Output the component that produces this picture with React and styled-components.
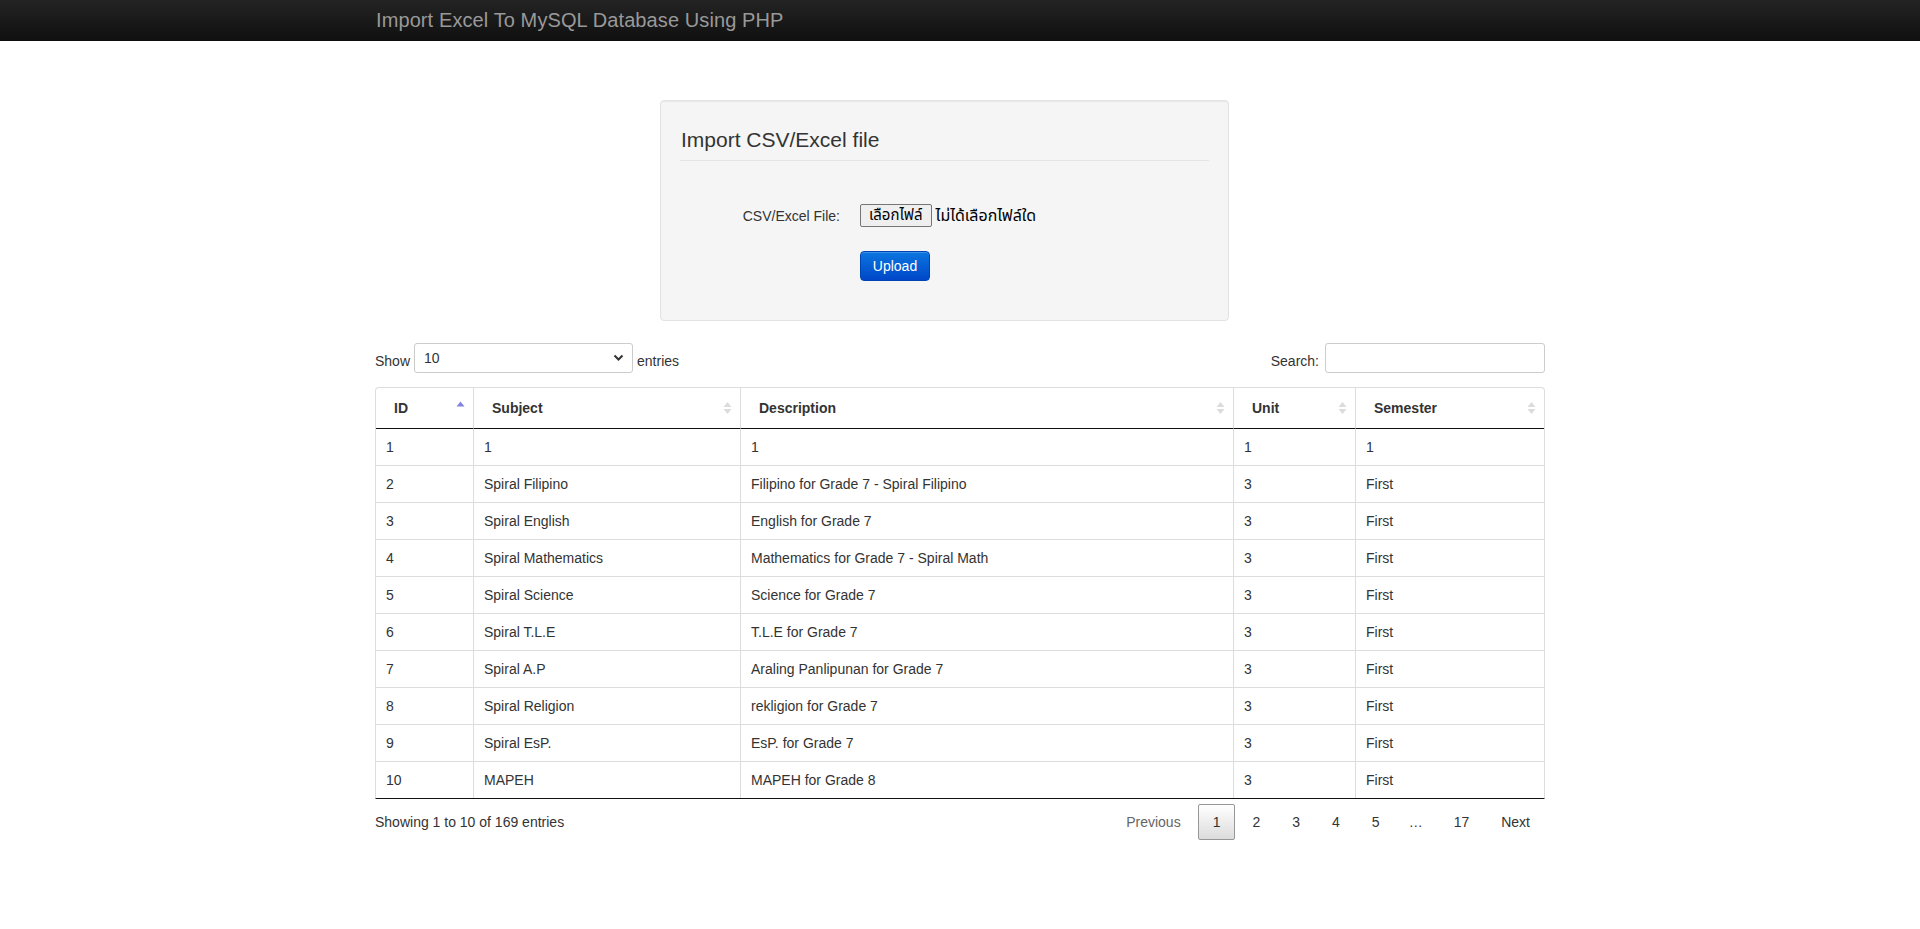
import React from "react";
import styled, { createGlobalStyle } from "styled-components";

const Global = createGlobalStyle`
  html, body { margin: 0; padding: 0; background: #fff; }
  body {
    font-family: "Liberation Sans", Arial, "Noto Sans Thai", "DejaVu Sans", sans-serif;
    font-size: 14px;
    line-height: 20px;
    color: #333;
  }
  * { box-sizing: border-box; }
`;

const Navbar = styled.header`
  height: 41px;
  background: linear-gradient(to bottom, #242424, #101010);
  border-bottom: 1px solid #0c0c0c;
`;

const NavInner = styled.div`
  width: 1170px;
  margin: 0 auto;
  padding: 10px 0 0 1px;
`;

const Brand = styled.span`
  font-size: 20px;
  line-height: 20px;
  color: #999;
  letter-spacing: 0.1px;
`;

const Container = styled.main`
  width: 1170px;
  margin: 0 auto;
`;

const Well = styled.section`
  margin: 59px 0 0 285px;
  width: 569px;
  background: #f5f5f5;
  border: 1px solid #e3e3e3;
  border-radius: 4px;
  box-shadow: inset 0 1px 1px rgba(0, 0, 0, 0.05);
  padding: 19px 19px 39px;
`;

const Legend = styled.h2`
  margin: 0;
  padding: 5px 0 5px 1px;
  font-size: 21px;
  font-weight: normal;
  line-height: 30px;
  color: #333;
  border-bottom: 1px solid #e5e5e5;
`;

const FormRow = styled.div`
  display: flex;
  align-items: center;
  margin-top: ${(p) => p.$top}px;
  padding-left: ${(p) => p.$indent || 0}px;
  height: ${(p) => p.$h}px;
`;

const Label = styled.label`
  width: 160px;
  text-align: right;
  margin-right: 20px;
  color: #333;
`;

const FileButton = styled.span`
  display: inline-flex;
  align-items: center;
  height: 23px;
  padding: 0 8px;
  border: 1px solid #767676;
  border-radius: 2px;
  background: #efefef;
  font-family: "Noto Sans Thai", "Liberation Sans", "DejaVu Sans", sans-serif;
  font-size: 15px;
  color: #000;
`;

const FileName = styled.span`
  margin-left: 4px;
  font-family: "Noto Sans Thai", "Liberation Sans", "DejaVu Sans", sans-serif;
  font-size: 16px;
  color: #000;
`;

const PrimaryButton = styled.button`
  width: 70px;
  height: 30px;
  border: 1px solid #0044b3;
  border-radius: 4px;
  background: linear-gradient(to bottom, #0a76df, #0047c8);
  color: #fff;
  font-family: "Liberation Sans", Arial, sans-serif;
  font-size: 14px;
  padding: 0;
  box-shadow: inset 0 1px 0 rgba(255, 255, 255, 0.2);
`;

const Controls = styled.div`
  display: flex;
  justify-content: space-between;
  align-items: flex-start;
  margin-top: 22px;
  height: 30px;
`;

const InlineLabel = styled.label`
  display: flex;
  align-items: flex-start;
  gap: ${(p) => p.$gap}px;
`;

const LabelText = styled.span`
  padding-top: 8px;
  line-height: 20px;
`;

const SelectWrap = styled.span`
  position: relative;
  display: inline-block;
`;

const Select = styled.select`
  appearance: none;
  width: 219px;
  height: 30px;
  border: 1px solid #ccc;
  border-radius: 3px;
  background: #fff;
  padding: 0 9px;
  font-family: "Liberation Sans", Arial, sans-serif;
  font-size: 14px;
  color: #333;
  line-height: 28px;
`;

const Chevron = styled.svg`
  position: absolute;
  right: 9px;
  top: 11px;
  pointer-events: none;
`;

const SearchInput = styled.input`
  width: 220px;
  height: 30px;
  border: 1px solid #ccc;
  border-radius: 3px;
  background: #fff;
  padding: 0 8px;
`;

const Table = styled.table`
  margin-top: 14px;
  width: 1170px;
  table-layout: fixed;
  border-collapse: separate;
  border-spacing: 0;
  border: 1px solid #ddd;
  border-bottom-color: #111;
  border-radius: 4px 4px 0 0;
`;

const Th = styled.th`
  position: relative;
  text-align: left;
  font-weight: bold;
  padding: 10px 18px;
  line-height: 20px;
  color: #333;
  border-bottom: 1px solid #111;
  & + & { border-left: 1px solid #ddd; }
`;

const Td = styled.td`
  padding: 8px 10px;
  line-height: 20px;
  color: #333;
  border-top: ${(p) => (p.$first ? "none" : "1px solid #ddd")};
  & + & { border-left: 1px solid #ddd; }
`;

const SortIcon = styled.svg`
  position: absolute;
  right: 8px;
  top: 13px;
`;

const Footer = styled.div`
  display: flex;
  justify-content: space-between;
  align-items: flex-start;
  margin-top: 5px;
`;

const Info = styled.div`
  padding-top: 8px;
  color: #333;
`;

const Pager = styled.div`
  display: flex;
  align-items: center;
`;

const PageBtn = styled.span`
  display: inline-block;
  min-width: 21px;
  margin-left: 2px;
  padding: 7px 14px;
  line-height: 20px;
  text-align: center;
  border: 1px solid ${(p) => (p.$current ? "#979797" : "transparent")};
  border-radius: 2px;
  background: ${(p) => (p.$current ? "linear-gradient(to bottom, #fff 0%, #dcdcdc 100%)" : "transparent")};
  color: ${(p) => (p.$disabled ? "#666" : "#333")};
`;

const Ellipsis = styled.span`
  padding: 0 14px;
  line-height: 20px;
  color: #333;
`;

const rows = [
  ["1", "1", "1", "1", "1"],
  ["2", "Spiral Filipino", "Filipino for Grade 7 - Spiral Filipino", "3", "First"],
  ["3", "Spiral English", "English for Grade 7", "3", "First"],
  ["4", "Spiral Mathematics", "Mathematics for Grade 7 - Spiral Math", "3", "First"],
  ["5", "Spiral Science", "Science for Grade 7", "3", "First"],
  ["6", "Spiral T.L.E", "T.L.E for Grade 7", "3", "First"],
  ["7", "Spiral A.P", "Araling Panlipunan for Grade 7", "3", "First"],
  ["8", "Spiral Religion", "rekligion for Grade 7", "3", "First"],
  ["9", "Spiral EsP.", "EsP. for Grade 7", "3", "First"],
  ["10", "MAPEH", "MAPEH for Grade 8", "3", "First"],
];

const columns = [
  { name: "ID", w: 97, active: true },
  { name: "Subject", w: 267 },
  { name: "Description", w: 493 },
  { name: "Unit", w: 122 },
  { name: "Semester", w: 189 },
];

function Sort({ active }) {
  if (active) {
    return (
      <SortIcon width="9" height="14" viewBox="0 0 9 14">
        <polygon points="0.5,5.5 4.5,0.5 8.5,5.5" fill="#8383e3" />
      </SortIcon>
    );
  }
  return (
    <SortIcon width="9" height="14" viewBox="0 0 9 14">
      <polygon points="0.5,6 4.5,1 8.5,6" fill="#dcdcdc" />
      <polygon points="0.5,8 4.5,13 8.5,8" fill="#dcdcdc" />
    </SortIcon>
  );
}

export default function App() {
  return (
    <>
      <Global />
      <Navbar>
        <NavInner>
          <Brand>Import Excel To MySQL Database Using PHP</Brand>
        </NavInner>
      </Navbar>
      <Container>
        <Well>
          <Legend>Import CSV/Excel file</Legend>
          <FormRow $top={43} $h={23}>
            <Label>CSV/Excel File:</Label>
            <FileButton>เลือกไฟล์</FileButton>
            <FileName>ไม่ได้เลือกไฟล์ใด</FileName>
          </FormRow>
          <FormRow $top={24} $h={30} $indent={180}>
            <PrimaryButton type="button">Upload</PrimaryButton>
          </FormRow>
        </Well>

        <Controls>
          <InlineLabel $gap={4}>
            <LabelText>Show</LabelText>
            <SelectWrap>
              <Select defaultValue="10">
                <option value="10">10</option>
                <option value="25">25</option>
                <option value="50">50</option>
                <option value="100">100</option>
              </Select>
              <Chevron width="11" height="8" viewBox="0 0 11 8">
                <polyline points="1.5,1.5 5.5,5.5 9.5,1.5" fill="none" stroke="#333" strokeWidth="2" />
              </Chevron>
            </SelectWrap>
            <LabelText>entries</LabelText>
          </InlineLabel>
          <InlineLabel $gap={6}>
            <LabelText>Search:</LabelText>
            <SearchInput type="search" />
          </InlineLabel>
        </Controls>

        <Table>
          <colgroup>
            {columns.map((c) => (
              <col key={c.name} style={{ width: c.w }} />
            ))}
          </colgroup>
          <thead>
            <tr>
              {columns.map((c) => (
                <Th key={c.name}>
                  {c.name}
                  <Sort active={c.active} />
                </Th>
              ))}
            </tr>
          </thead>
          <tbody>
            {rows.map((r, i) => (
              <tr key={r[0]}>
                {r.map((cell, j) => (
                  <Td key={j} $first={i === 0}>
                    {cell}
                  </Td>
                ))}
              </tr>
            ))}
          </tbody>
        </Table>

        <Footer>
          <Info>Showing 1 to 10 of 169 entries</Info>
          <Pager>
            <PageBtn $disabled>Previous</PageBtn>
            <PageBtn $current>1</PageBtn>
            <PageBtn>2</PageBtn>
            <PageBtn>3</PageBtn>
            <PageBtn>4</PageBtn>
            <PageBtn>5</PageBtn>
            <Ellipsis>…</Ellipsis>
            <PageBtn>17</PageBtn>
            <PageBtn>Next</PageBtn>
          </Pager>
        </Footer>
      </Container>
    </>
  );
}
